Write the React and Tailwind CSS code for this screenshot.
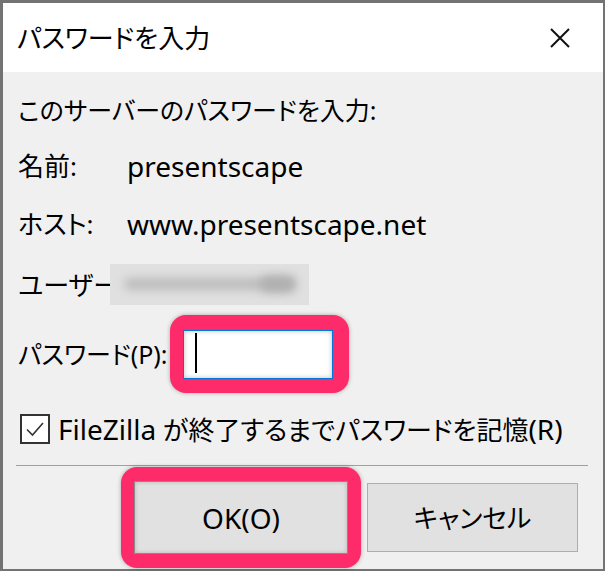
const font = "font-['Noto_Sans','Noto_Sans_CJK_JP',sans-serif] [font-feature-settings:'palt']"

function CloseIcon() {
  return (
    <svg viewBox="0 0 20 20" className="w-5 h-5">
      <path d="M1 1L19 19M19 1L1 19" stroke="#111" strokeWidth="2" />
    </svg>
  )
}

function Check() {
  return (
    <span className="grid place-items-center w-[30px] h-[30px] shrink-0 border-2 border-[#333] bg-white">
      <svg viewBox="0 0 20 20" className="w-[20px] h-[20px]">
        <path d="M2 10.5L7.5 16L18 4" fill="none" stroke="#333" strokeWidth="1.6" />
      </svg>
    </span>
  )
}

// latin text in the reference runs a bit wider than the kana
const L = ({ children }) => <span className="text-[28px]">{children}</span>

export default function App() {
  return (
    <div className={`w-[605px] h-[571px] flex flex-col border-l-[3px] border-t-[3px] border-r-2 border-b-2 border-[#737373] bg-[#f0f0f0] text-black ${font}`}>
      {/* title bar */}
      <div className="h-[69px] shrink-0 bg-white flex items-center justify-between pl-[14px] pr-[33px]">
        <span className="text-[26px] leading-none">パスワードを入力</span>
        <CloseIcon />
      </div>

      <div className="flex flex-col pl-[15px] text-[26px] leading-none whitespace-nowrap">
        <div className="mt-[20px] h-[36px] flex items-center text-[25px]">このサーバーのパスワードを入力:</div>

        <div className="mt-[20px] h-[36px] flex items-center">
          <span className="w-[109px] shrink-0">名前:</span>
          <L>presentscape</L>
        </div>

        <div className="mt-[22px] h-[36px] flex items-center">
          <span className="w-[109px] shrink-0">ホスト:</span>
          <L>www.presentscape.net</L>
        </div>

        <div className="mt-[22px] h-[41px] flex items-center">
          <span className="w-[92px] shrink-0">ユーザー:</span>
          <div className="relative w-[199px] h-[41px] shrink-0 bg-[#e0e0e0] overflow-hidden">
            <div className="absolute left-[14px] top-[14px] w-[170px] h-[12px] rounded-full bg-[#bcbcbc] blur-[5px]" />
            <div className="absolute left-[150px] top-[12px] w-[36px] h-[16px] rounded-full bg-[#b0b0b0] blur-[5px]" />
          </div>
        </div>

        <div className="mt-[10px] h-[78px] flex items-center">
          <span className="w-[152px] shrink-0 text-[25px]">パスワード(P):</span>
          <div className="rounded-[16px] bg-[#fe2b6b] pl-[13px] pr-[16px] pt-[15px] pb-[14px] shadow-[0_0_4px_rgba(0,0,0,0.3)]">
            <div className="w-[150px] h-[49px] bg-white border border-[#0078d7] shadow-[inset_0_0_5px_rgba(0,0,0,0.25)] pl-[11px] pt-[2px]">
              <div className="w-[1.5px] h-[40px] bg-black" />
            </div>
          </div>
        </div>

        <div className="mt-[21px] h-[30px] flex items-center gap-[8px] pl-[2px]">
          <Check />
          <span><L>FileZilla</L> が終了するまでパスワードを記憶<L>(R)</L></span>
        </div>

        <div className="mt-[21px] ml-[-2px] mr-[15px] h-px bg-[#a0a0a0]" />

        <div className="mt-px h-[101px] flex items-center pl-[103px] gap-[6px]">
          <div className="rounded-[16px] bg-[#fe2b6b] px-[13px] py-[14px] shadow-[0_0_4px_rgba(0,0,0,0.3)]">
            <div className="w-[214px] h-[73px] bg-[#e1e1e1] border border-[#8a8a8a] shadow-[inset_0_0_4px_rgba(0,0,0,0.2)] grid place-items-center text-[28px]">
              OK(O)
            </div>
          </div>
          <div className="w-[211px] h-[69px] bg-[#e1e1e1] border border-[#adadad] grid place-items-center">
            キャンセル
          </div>
        </div>
      </div>
    </div>
  )
}
